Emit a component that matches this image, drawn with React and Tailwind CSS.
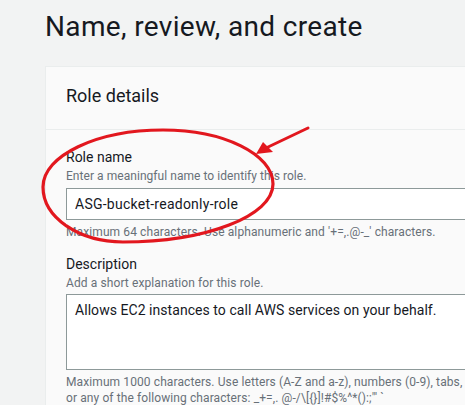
export default function App() {
  return (
    <div className="relative h-[405px] w-[465px] overflow-hidden bg-[#f2f3f3] font-['Roboto',sans-serif] text-[#16191f]">
      <div className="pl-[45px] pt-[9px]">
        <h1 className="whitespace-nowrap text-[28px] font-normal leading-[36px] tracking-[0.35px]">Name, review, and create</h1>

        <div className="mt-[21px] w-[700px] border-l border-t border-[#eaeded] bg-[#fafafa]">
          <div className="h-[63px] border-b border-[#eaeded] px-[20px] pt-[18px]">
            <h2 className="text-[18px] font-normal leading-[22px]">Role details</h2>
          </div>

          <div className="px-[20px] pt-[16px] pb-6">
            <label className="block text-[14px] leading-[22px]">Role name</label>
            <p className="text-[12px] leading-[16px] tracking-[0.05px] text-[#687078]">Enter a meaningful name to identify this role.</p>
            <input
              readOnly
              value="ASG-bucket-readonly-role"
              className="mt-[4px] block h-[32px] w-[600px] border border-[#8d9999] bg-white px-[8px] text-[14px] leading-[22px] tracking-[0.25px] text-[#16191f] outline-none"
            />
            <p className="mt-[4px] whitespace-nowrap text-[12px] leading-[16px] tracking-[0.1px] text-[#687078]">
              Maximum 64 characters. Use alphanumeric and '+=,.@-_' characters.
            </p>

            <label className="mt-[13px] block text-[14px] leading-[22px]">Description</label>
            <p className="text-[12px] leading-[16px] tracking-[0.1px] text-[#687078]">Add a short explanation for this role.</p>
            <textarea
              readOnly
              value="Allows EC2 instances to call AWS services on your behalf."
              className="mt-[3px] block h-[76px] w-[600px] resize-none border border-[#8d9999] bg-white px-[8px] py-[4px] text-[14px] leading-[22px] tracking-[0.05px] text-[#16191f] outline-none"
            />
            <p className="mt-[4px] whitespace-nowrap text-[12px] leading-[16px] tracking-[0.1px] text-[#687078]">
              Maximum 1000 characters. Use letters (A-Z and a-z), numbers (0-9), tabs,
              <br />
              or any of the following characters: _+=,. @-/\[{'{}'}]!#$%^*():;"' `
            </p>
          </div>
        </div>
      </div>

      <svg className="pointer-events-none absolute left-0 top-0" width="465" height="405" viewBox="0 0 465 405">
        <path
          d="M43 187 C43 155.5 96.7 130 163 130 C223.8 130 273 154.2 273 184 C273 216 205.8 242 123 242 C78.8 242 43 217.4 43 187 Z"
          fill="none"
          stroke="#e2171e"
          strokeWidth="3.2"
        />
        <line x1="308" y1="128" x2="266" y2="148" stroke="#e2171e" strokeWidth="3" strokeLinecap="round" />
        <polygon points="256,154 263,142 273,152" fill="#e2171e" />
      </svg>
    </div>
  );
}
